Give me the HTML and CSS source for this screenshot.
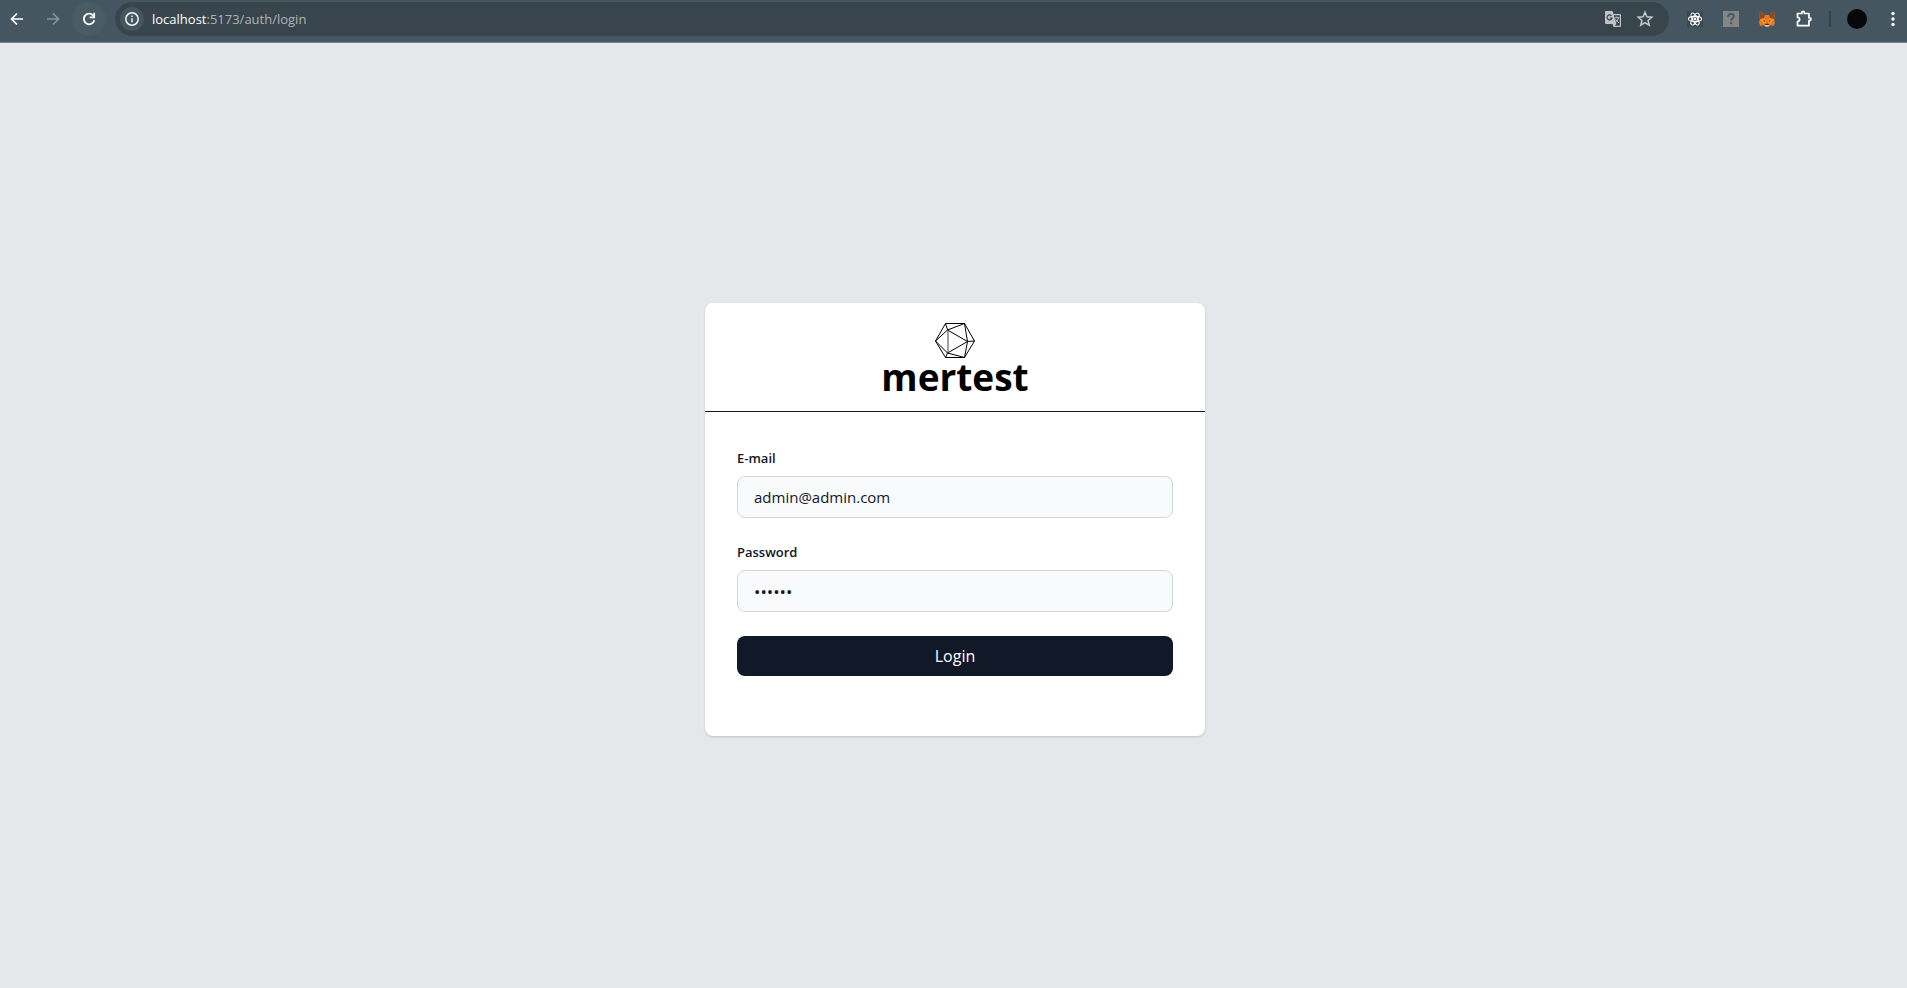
FILE: index.html
```html
<!DOCTYPE html>
<html lang="en">
<head>
<meta charset="utf-8">
<meta name="viewport" content="width=device-width, initial-scale=1">
<title>mertest – Login</title>
<link rel="stylesheet" href="styles.css">
</head>
<body class="window">
<header class="toolbar">
  <nav class="nav" aria-label="Browser navigation">
    <button class="tool" type="button" aria-label="Back">
      <svg width="16" height="16" viewBox="0 0 16 16" fill="none" stroke="#fff" stroke-width="1.7"><path d="M14 8H3M8 2.5L2.5 8 8 13.5"/></svg>
    </button>
    <button class="tool" type="button" aria-label="Forward" disabled>
      <svg width="16" height="16" viewBox="0 0 16 16" fill="none" stroke="#86939a" stroke-width="1.7"><path d="M2 8h11M8 2.5L13.500 8 8 13.500"/></svg>
    </button>
    <button class="tool tool-lit" type="button" aria-label="Reload">
      <svg width="16" height="16" viewBox="0 0 16 16" fill="none" stroke="#fff" stroke-width="1.8"><path d="M13.300 9.300A5.300 5.300 0 1 1 12 4.300L13.400 6"/><path d="M13.200 1.800V6.300H8.700"/></svg>
    </button>
  </nav>
  <div class="address">
    <button class="site" type="button" aria-label="Site information">
      <svg width="16" height="16" viewBox="0 0 16 16" fill="none" stroke="#f1f4f5" stroke-width="1.5"><circle cx="8" cy="8" r="6.200"/><path d="M8 7.200v4M8 4.500v1.600"/></svg>
    </button>
    <span class="url"><span class="host">localhost</span>:5173/auth/login</span>
    <button class="action" type="button" aria-label="Translate">
      <svg width="18" height="18" viewBox="0 0 18 18"><path d="M2 1h6.500l1 3H16a1 1 0 0 1 1 1v11a1 1 0 0 1-1 1H9.500l-1-3H2a1 1 0 0 1-1-1V2a1 1 0 0 1 1-1z" fill="#c0c4c6"/><path d="M9.800 5.200h6v10.600h-5l1.600-1.800z" fill="#39454c"/><path d="M7.500 5.800A2.500 2.500 0 1 0 8 8H5.600" fill="none" stroke="#39454c" stroke-width="1.200"/><path d="M10.300 7.700h5M12.800 6.500v1.200M14.500 8c-.5 2-1.800 3.300-3.200 4.200M11.500 9.200c.7 1.500 2 2.500 3.400 3.600" fill="none" stroke="#c0c4c6"/></svg>
    </button>
    <button class="action" type="button" aria-label="Bookmark">
      <svg width="18" height="18" viewBox="0 0 18 18" fill="none" stroke="#c5cacc" stroke-width="1.500"><path d="M9 2.300l1.900 4.500 4.900.4-3.700 3.200 1.100 4.800L9 12.700l-4.200 2.500 1.100-4.800-3.700-3.200 4.900-.4z"/></svg>
    </button>
  </div>
  <div class="extensions">
    <button class="ext" type="button" aria-label="React Developer Tools">
      <svg width="16" height="16" viewBox="0 0 16 16"><path fill="#384950" d="M0 0h16v16H0z"/><g fill="none" stroke="#fff" stroke-width="1.100"><ellipse cx="8" cy="8" rx="6.600" ry="2.600"/><ellipse cx="8" cy="8" rx="6.600" ry="2.600" transform="rotate(60 8 8)"/><ellipse cx="8" cy="8" rx="6.600" ry="2.600" transform="rotate(120 8 8)"/></g><circle cx="8" cy="8" r="1.400" fill="#fff"/></svg>
    </button>
    <button class="ext" type="button" aria-label="Unknown extension">
      <svg width="16" height="16" viewBox="0 0 16 16"><path fill="#858585" d="M0 0h16v16H0z"/><path d="M5.300 6V5.200C5.300 3.600 6.300 3 8 3s2.800.7 2.800 2.300C10.800 7.200 8 7.400 8 9.800" fill="none" stroke="#475b65" stroke-width="1.900"/><path fill="#475b65" d="M7 11.200h2.100v2H7z"/></svg>
    </button>
    <button class="ext" type="button" aria-label="MetaMask">
      <svg width="16" height="16" viewBox="0 0 16 16"><path fill="#e8791f" d="M1 .5l5 3.500h4L15 .5l.8 4.500-.8 3.500 1 3-1.300 3.500-3.200-.7L9.500 15.700h-3L4.500 14.300 1.300 15 0 11.500l1-3L.2 5z"/><path fill="#8d4a20" d="M1 .5L6 4 5 7.200.9 8 .2 5zM15 .5L10 4l1 3.200 4.100.8.7-3z"/><path fill="#f59331" d="M5.500 7.300L7 12l-2.500 1L1 8.300zM10.500 7.300L9 12l2.500 1L15 8.300z"/><path fill="#2a2d32" d="M4 9l2 .8-.3 1.200zM12 9l-2 .8.3 1.200zM6.500 12.700h3l.3 1.500H6.200z"/><path fill="#d9cdc4" d="M5.500 13.900h5l-1.200 1.700H6.700z"/></svg>
    </button>
    <button class="ext" type="button" aria-label="Extensions">
      <svg width="18" height="18" viewBox="0 0 18 18" fill="none" stroke="#fff" stroke-width="1.700" stroke-linejoin="round"><path d="M2.500 3.500h4.300V2.600a1.200 1.200 0 0 1 2.600 0v.9h4.500v4.300h.7a1.300 1.300 0 0 1 0 2.700h-.7v5.200H2.500v-4.200c2.800-.3 2.800-3.800 0-4.100z"/></svg>
    </button>
    <span class="divider"></span>
    <button class="avatar" type="button" aria-label="Profile"></button>
    <button class="more" type="button" aria-label="Menu">
      <svg width="4" height="16" viewBox="0 0 4 16" fill="#fff"><circle cx="2" cy="2.500" r="1.700"/><circle cx="2" cy="8" r="1.700"/><circle cx="2" cy="13.500" r="1.700"/></svg>
    </button>
  </div>
</header>
<main class="page">
  <section class="card">
    <div class="brand">
      <svg class="brand-mark" width="40" height="37" viewBox="0.5 0 40 37" fill="none" stroke="#000"><path d="M1 19L11 1.500H30L40 19 30 35.500H11zM1 19L13 8 33 19.500 13 31zM11 1.500L13 8 30 1.500 33 19.500 30 35.500 13 31 11 35.500M33 19.500L40 19"/><path d="M13.500 8v23" stroke="#444"/></svg>
      <h1 class="brand-name">mertest</h1>
    </div>
    <form class="form">
      <div class="field">
        <label class="label" for="email">E-mail</label>
        <input class="input" id="email" type="email" value="admin@admin.com">
      </div>
      <div class="field">
        <label class="label" for="password">Password</label>
        <input class="input input-secret" id="password" type="password" value="123456">
      </div>
      <button class="submit" type="button">Login</button>
    </form>
  </section>
</main>
</body>
</html>
```
FILE: styles.css
```css
*, *::before, *::after { box-sizing: border-box; }

.window {
  margin: 0;
  min-height: 100vh;
  display: flex;
  flex-direction: column;
  background: #e5e7eb;
  color: #111827;
  font-family: "Segoe UI", "Open Sans", "Noto Sans", sans-serif;
}

button {
  padding: 0;
  border: 0;
  background: none;
  font: inherit;
}

svg { display: block; }

.toolbar {
  display: flex;
  align-items: center;
  height: 43px;
  padding: 0 12px 5px 0;
  background: #455660;
  border-bottom: 1px solid #74858f;
}

.nav {
  display: flex;
  gap: 2px;
  margin-right: 9px;
}

.tool {
  display: grid;
  place-items: center;
  width: 34px;
  height: 34px;
  border-radius: 50%;
}

.tool-lit { background: #495b65; }

.address {
  flex: 1;
  display: flex;
  align-items: center;
  gap: 14px;
  height: 34px;
  padding: 0 15px 0 5px;
  border-radius: 17px;
  background: #39454c;
}

.site {
  display: grid;
  place-items: center;
  width: 24px;
  height: 24px;
  border-radius: 50%;
  background: #46565f;
}

.url {
  flex: 1;
  margin-left: -6px;
  color: #adb4b8;
  font-size: 13px;
  line-height: 20px;
}

.host { color: #fff; }

.extensions {
  display: flex;
  align-items: center;
  gap: 20px;
  margin-left: 18px;
}

.divider {
  width: 2px;
  height: 16px;
  margin: 0 -4px;
  background: #34434b;
}

.avatar {
  width: 20px;
  height: 20px;
  border-radius: 50%;
  background: #080808;
}

.more { padding: 0 0 0 4px; }

.page {
  flex: 1;
  display: grid;
  place-items: center;
  padding: 8px 0 0 3px;
}

.card {
  width: 500px;
  max-width: 100%;
  border-radius: 8px;
  background: #fff;
  box-shadow: 0 1px 3px rgba(0, 0, 0, 0.1), 0 1px 2px rgba(0, 0, 0, 0.06);
}

.brand {
  display: flex;
  flex-direction: column;
  align-items: center;
  padding: 19px 0 16px;
  border-bottom: 1px solid #111827;
}

.brand-name {
  margin: 0;
  color: #000;
  font-size: 37px;
  font-weight: 700;
  line-height: 36px;
}

.form {
  display: grid;
  gap: 24px;
  padding: 36px 32px 60px;
}

.field {
  display: grid;
  gap: 8px;
}

.label {
  font-size: 13px;
  font-weight: 600;
  line-height: 20px;
}

.input {
  width: 100%;
  height: 42px;
  padding: 0 16px;
  border: 1px solid #d1d5db;
  border-radius: 8px;
  background: #f9fafb;
  color: #111827;
  font-family: inherit;
  font-size: 15px;
}

.input-secret { font-size: 17px; }

.submit {
  height: 40px;
  border-radius: 8px;
  background: #111827;
  color: #fff;
  font-size: 16px;
}
```
